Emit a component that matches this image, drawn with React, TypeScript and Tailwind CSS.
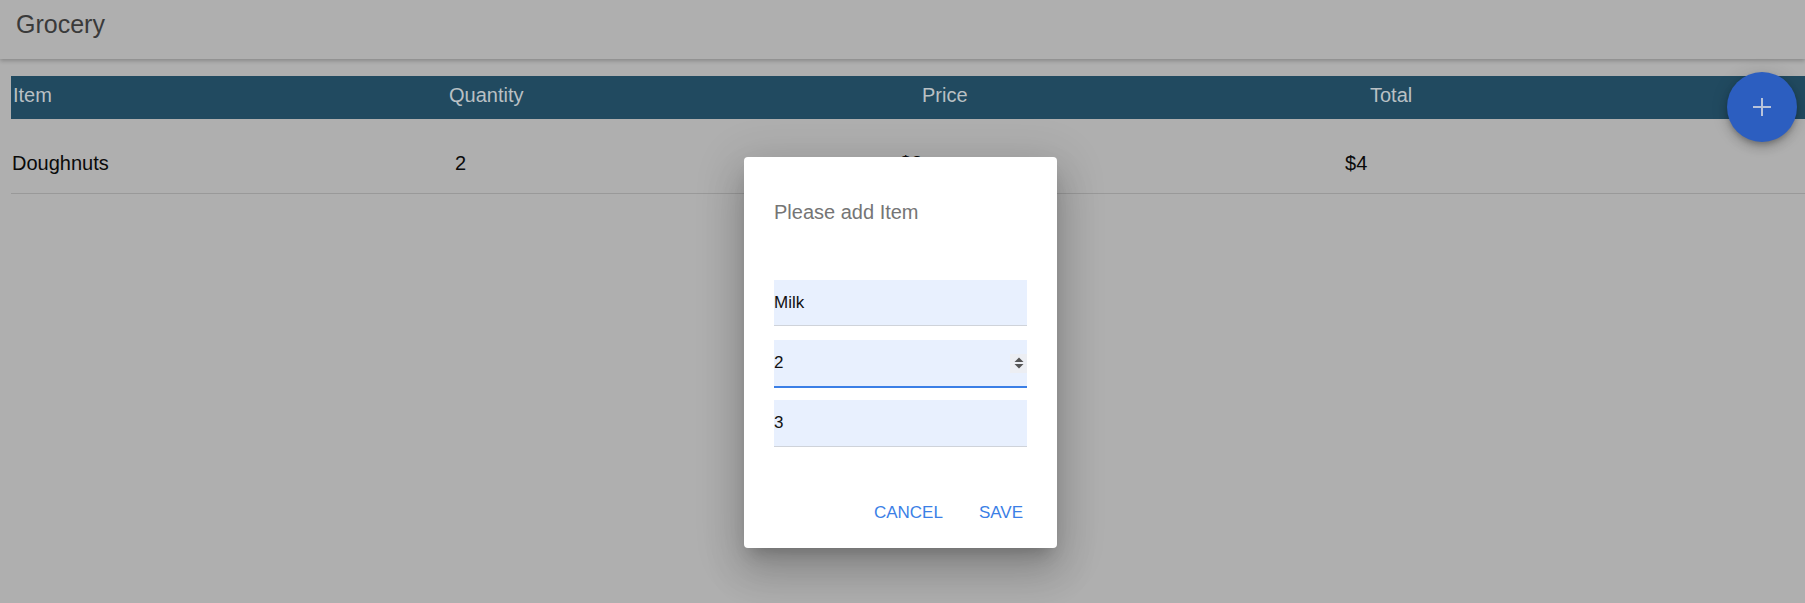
import { useState } from "react";

const headers = ["Item", "Quantity", "Price", "Total"];
const rows = [{ item: "Doughnuts", qty: 2, price: 2 }];

const Spinner = () => (
  <div className="flex h-[19px] w-[18px] items-center justify-center bg-[#eceef3]">
    <svg width="10" height="12" viewBox="0 0 10 12">
      <path d="M0.5 5 L5 0.5 L9.5 5 Z" fill="#555" />
      <path d="M0.5 7 L5 11.5 L9.5 7 Z" fill="#555" />
    </svg>
  </div>
);

const App = () => {
  const [form, setForm] = useState<any>({ name: "Milk", qty: "2", price: "3" });

  return (
    <div className="relative h-[603px] w-full overflow-hidden bg-[#afafaf] font-['Liberation_Sans',Arial,sans-serif]">
      {/* app bar */}
      <header className="relative z-10 h-[59px] px-[16px] pt-[10px] shadow-[0_2px_4px_rgba(0,0,0,0.22)]">
        <h1 className="text-[25px] leading-[28px] text-[#3a3a3a]">Grocery</h1>
      </header>

      {/* table */}
      <div className="ml-[11px] mt-[17px]">
        <div className="grid h-[43px] grid-cols-[436px_473px_448px_1fr] bg-[#214a60] pl-[2px] pt-[8px] text-[20px] leading-[23px] text-[#b9c0c4]">
          {headers.map((h) => (
            <span key={h}>{h}</span>
          ))}
        </div>
        {rows.map((r) => (
          <div
            key={r.item}
            className="grid h-[75px] grid-cols-[443px_445px_445px_1fr] border-b border-[#999] pl-[1px] pt-[33px] text-[20px] leading-[23px] text-[#0a0a0a]"
          >
            <span>{r.item}</span>
            <span>{r.qty}</span>
            <span>${r.price}</span>
            <span>${r.qty * r.price}</span>
          </div>
        ))}
      </div>

      {/* floating add button */}
      <button className="absolute left-[1727px] top-[72px] flex h-[70px] w-[70px] items-center justify-center rounded-full bg-[#2c5ec0] shadow-[0_3px_5px_-1px_rgba(0,0,0,0.2),0_6px_10px_0_rgba(0,0,0,0.14),0_1px_18px_0_rgba(0,0,0,0.12)]">
        <svg width="20" height="20" viewBox="0 0 20 20">
          <path d="M10 1 V19 M1 10 H19" stroke="#b8c3da" strokeWidth="2" />
        </svg>
      </button>

      {/* dialog */}
      <div className="absolute left-[744px] top-[157px] z-20 flex h-[391px] w-[313px] flex-col rounded-[4px] bg-white px-[30px] pt-[44px] shadow-[0_11px_15px_-7px_rgba(0,0,0,0.2),0_24px_38px_3px_rgba(0,0,0,0.14),0_9px_46px_8px_rgba(0,0,0,0.12)]">
        <h2 className="text-[20px] leading-[23px] text-[#757575]">Please add Item</h2>

        <div className="mt-[56px] flex h-[46px] items-center border-b border-[#cfd3da] bg-[#e8f0fe] text-[17px] text-[#111]">
          <input
            value={form.name}
            onChange={(e) => setForm({ ...form, name: e.target.value })}
            className="w-full bg-transparent outline-none"
          />
        </div>
        <div className="mt-[14px] flex h-[48px] items-center border-b-2 border-[#3b7fe6] bg-[#e8f0fe] text-[17px] text-[#111]">
          <input
            value={form.qty}
            onChange={(e) => setForm({ ...form, qty: e.target.value })}
            className="w-full bg-transparent outline-none"
          />
          <Spinner />
        </div>
        <div className="mt-[12px] flex h-[47px] items-center border-b border-[#cfd3da] bg-[#e8f0fe] text-[17px] text-[#111]">
          <input
            value={form.price}
            onChange={(e) => setForm({ ...form, price: e.target.value })}
            className="w-full bg-transparent outline-none"
          />
        </div>

        <div className="mt-[56px] flex justify-end gap-[36px] pr-[4px] text-[17px] leading-[20px] text-[#3b7fe6]">
          <button>CANCEL</button>
          <button>SAVE</button>
        </div>
      </div>
    </div>
  );
};

export default App;
